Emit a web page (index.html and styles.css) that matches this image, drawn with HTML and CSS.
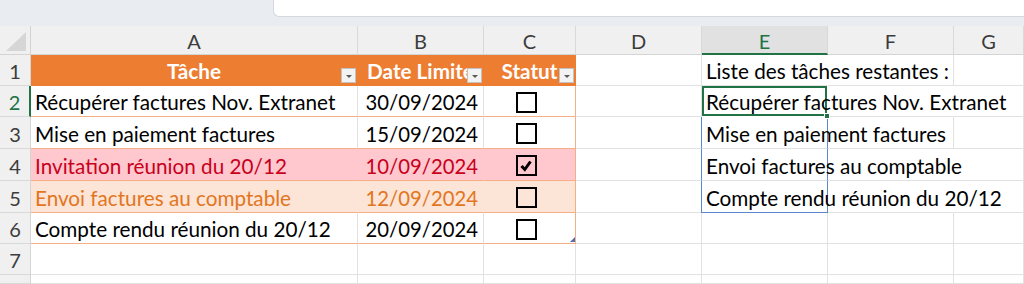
FILE: index.html
```html
<!DOCTYPE html>
<html lang="fr">
<head>
<meta charset="utf-8">
<title>Tâches</title>
<link rel="stylesheet" href="styles.css">
</head>
<body>
<div class="topbar"><div class="fxbox"></div></div>
<div class="sheet">
  <!-- column headers -->
  <div class="corner"><svg width="30" height="28" viewBox="0 0 30 28"><polygon points="6,25 26,25 26,6" fill="#d6d6d6"/></svg></div>
  <div class="ch">A</div>
  <div class="ch">B</div>
  <div class="ch">C</div>
  <div class="ch">D</div>
  <div class="ch sel">E</div>
  <div class="ch">F</div>
  <div class="ch">G</div>

  <!-- row 1 -->
  <div class="rh">1</div>
  <div class="c th center">Tâche<span class="flt"></span></div>
  <div class="c th center clip">Date Limite<span class="flt"></span></div>
  <div class="c th center tr">Statut<span class="flt"></span></div>
  <div class="c"></div>
  <div class="c nr">Liste des tâches restantes :</div>
  <div class="c"></div>
  <div class="c"></div>

  <!-- row 2 -->
  <div class="rh selrow">2</div>
  <div class="c tb">Récupérer factures Nov. Extranet</div>
  <div class="c tb right">30/09/2024</div>
  <div class="c tb tr box"><span class="cb"></span></div>
  <div class="c"></div>
  <div class="c nr active">Récupérer factures Nov. Extranet<span class="handle"></span></div>
  <div class="c nr"></div>
  <div class="c"></div>

  <!-- row 3 -->
  <div class="rh">3</div>
  <div class="c tb">Mise en paiement factures</div>
  <div class="c tb right">15/09/2024</div>
  <div class="c tb tr box"><span class="cb"></span></div>
  <div class="c"></div>
  <div class="c nr rng rng-top">Mise en paiement factures</div>
  <div class="c"></div>
  <div class="c"></div>

  <!-- row 4 -->
  <div class="rh">4</div>
  <div class="c tb bad">Invitation réunion du 20/12</div>
  <div class="c tb bad right">10/09/2024</div>
  <div class="c tb bad tr box"><span class="cb"><svg width="17" height="17" viewBox="0 0 17 17"><path d="M3.5 9 L6.8 12.5 L12.5 4.5" fill="none" stroke="#000" stroke-width="3"/></svg></span></div>
  <div class="c"></div>
  <div class="c nr rng">Envoi factures au comptable</div>
  <div class="c nr"></div>
  <div class="c"></div>

  <!-- row 5 -->
  <div class="rh">5</div>
  <div class="c tb warn">Envoi factures au comptable</div>
  <div class="c tb warn right">12/09/2024</div>
  <div class="c tb warn tr box"><span class="cb"></span></div>
  <div class="c"></div>
  <div class="c nr rng rng-bot">Compte rendu réunion du 20/12</div>
  <div class="c nr"></div>
  <div class="c"></div>

  <!-- row 6 -->
  <div class="rh">6</div>
  <div class="c tb">Compte rendu réunion du 20/12</div>
  <div class="c tb right">20/09/2024</div>
  <div class="c tb tr box"><span class="cb"></span><span class="resize"></span></div>
  <div class="c"></div>
  <div class="c"></div>
  <div class="c"></div>
  <div class="c"></div>

  <!-- row 7 -->
  <div class="rh">7</div>
  <div class="c"></div>
  <div class="c"></div>
  <div class="c"></div>
  <div class="c"></div>
  <div class="c"></div>
  <div class="c"></div>
  <div class="c"></div>

  <!-- row 8 (partial) -->
  <div class="rh"></div>
  <div class="c"></div>
  <div class="c"></div>
  <div class="c"></div>
  <div class="c"></div>
  <div class="c"></div>
  <div class="c"></div>
  <div class="c"></div>
</div>
</body>
</html>
```
FILE: styles.css
```css
html, body {
  margin: 0;
  padding: 0;
  background: #ffffff;
  overflow: hidden;
}
body {
  width: 1024px;
  height: 284px;
  font-family: Lato, "Open Sans", "Liberation Sans", sans-serif;
  color: #000;
}
.topbar {
  height: 26px;
  background: #e9edf1;
  display: flex;
  justify-content: flex-end;
  box-sizing: border-box;
}
.fxbox {
  width: 751px;
  height: 17px;
  background: #ffffff;
  border-left: 1px solid #d5d9de;
  border-bottom: 1px solid #d5d9de;
  border-bottom-left-radius: 6px;
  box-sizing: border-box;
}
.sheet {
  display: grid;
  grid-template-columns: 31px 327px 126px 92px 126px 126px 126px 1fr;
  grid-template-rows: 29px 31px 31px 32px 32px 32px 31px 31px 1fr;
  height: 258px;
}
.corner {
  background: #f0f0f0;
  border-right: 1px solid #d4d4d4;
  border-bottom: 1px solid #d4d4d4;
  box-sizing: border-box;
  display: flex;
}
.ch {
  background: #f0f0f0;
  border-right: 1px solid #d9d9d9;
  border-bottom: 1px solid #d4d4d4;
  box-sizing: border-box;
  display: flex;
  align-items: center;
  justify-content: center;
  font-size: 20px;
  color: #3c3c3c;
  padding-top: 2px;
}
.ch.sel {
  background: #e1e1e1;
  color: #217346;
  border-bottom: 2px solid #217346;
}
.rh {
  background: #f0f0f0;
  border-right: 1px solid #d4d4d4;
  border-bottom: 1px solid #d9d9d9;
  box-sizing: border-box;
  display: flex;
  align-items: center;
  justify-content: center;
  font-size: 20px;
  color: #3c3c3c;
  padding-top: 2px;
}
.rh.selrow {
  color: #217346;
  border-right: 2px solid #217346;
}
.c {
  position: relative;
  box-sizing: border-box;
  border-right: 1px solid #e1e1e1;
  border-bottom: 1px solid #e1e1e1;
  display: flex;
  align-items: center;
  padding: 2px 4px 0 4px;
  white-space: nowrap;
  font-size: 20.7px;
  min-width: 0;
}
.c.nr { border-right-color: transparent; }
.c.center { justify-content: center; }
.c.right { justify-content: flex-end; padding-right: 5px; font-size: 20.3px; }
.c.clip { overflow: hidden; }
.c.th {
  background: #ed7d31;
  color: #ffffff;
  font-weight: bold;
  border-right-color: transparent;
  border-bottom-color: #ed7d31;
}
.c.th.tr { border-right-color: #ed7d31; }
.c.tb { border-bottom-color: #f4b084; }
.c.tr { border-right-color: #f4b084; }
.c.bad {
  background: #ffc7ce;
  color: #c8001c;
  border-right-color: transparent;
}
.c.warn {
  background: #fce4d6;
  color: #e2761f;
  border-right-color: transparent;
}
.c.bad.tr, .c.warn.tr { border-right-color: #f4b084; }
.c.box { justify-content: center; padding-right: 10px; }
.cb {
  width: 21px;
  height: 21px;
  border: 2px solid #000;
  box-sizing: border-box;
  display: flex;
  align-items: center;
  justify-content: center;
  background: transparent;
}
.flt {
  position: absolute;
  right: 1px;
  bottom: 2px;
  width: 15px;
  height: 15px;
  background: #f3f3f3;
  border: 1px solid #c2c2c2;
  box-sizing: border-box;
}
.flt::after {
  content: "";
  position: absolute;
  left: 4px;
  top: 6px;
  border-left: 3px solid transparent;
  border-right: 3px solid transparent;
  border-top: 3px solid #5a5a5a;
}
.c.active {
  box-shadow: inset 0 0 0 2px #217346;
  border-bottom-color: transparent;
}
.handle {
  position: absolute;
  right: -3px;
  bottom: -3px;
  width: 6px;
  height: 6px;
  background: #217346;
  border: 1px solid #ffffff;
  box-sizing: border-box;
  z-index: 2;
}
.c.rng {
  border-left: 1px solid #5b87d1;
  border-right: 1px solid #5b87d1;
  margin-left: -1px;
}
.c.rng-bot { border-bottom: 1px solid #5b87d1; }
.resize {
  position: absolute;
  right: 0;
  bottom: 1px;
  width: 0;
  height: 0;
  border-left: 5px solid transparent;
  border-bottom: 5px solid #4f6fb3;
}
```
